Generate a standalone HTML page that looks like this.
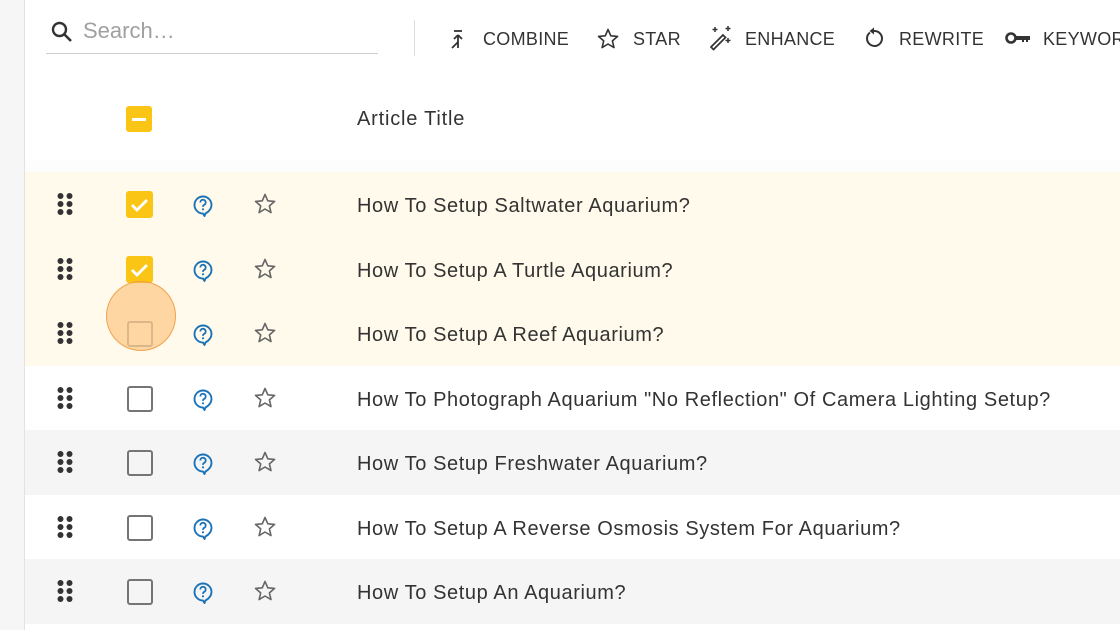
<!DOCTYPE html>
<html><head><style>
body{margin:0;width:1120px;height:630px;overflow:hidden;background:#fff;font-family:"Liberation Sans",Arial,sans-serif;position:relative}
.side{position:absolute;left:0;top:0;width:24px;height:630px;background:#f6f6f6;border-right:1px solid #e2e2e2}
.abs{position:absolute}
.btn{position:absolute;top:28px;font-size:18px;color:#333;letter-spacing:0.3px;line-height:22px}
.row{position:absolute;left:25px;width:1095px;height:65px}
.row .t{position:absolute;left:332px;top:23px;font-size:20px;letter-spacing:0.6px;color:#333;white-space:nowrap}
.dots{position:absolute;left:32px;top:20px}
.cb{position:absolute;left:102px;top:20px;width:22px;height:22px;border:2.5px solid #757575;border-radius:3px}
.cbon{position:absolute;left:101px;top:19px;width:27px;height:27px;background:#fbc515;border-radius:3px}
.help{position:absolute;left:167px;top:21px}
.star{position:absolute;left:228px;top:20px}
</style></head><body>
<div class="side"></div>
<svg class="abs" style="left:50px;top:20px" width="24" height="24" viewBox="0 0 24 24"><circle cx="9.5" cy="9.5" r="6.5" fill="none" stroke="#333" stroke-width="2.4"/><path d="M14 14l7 7" stroke="#333" stroke-width="2.6"/></svg>
<div class="abs" style="left:83px;top:18px;font-size:22px;color:#a0a0a0">Search…</div>
<div class="abs" style="left:46px;top:53px;width:332px;height:1px;background:#cfcfcf"></div>
<div class="abs" style="left:414px;top:20px;width:1px;height:36px;background:#ddd"></div>
<svg class="abs" style="left:448px;top:28px" width="20" height="22" viewBox="0 0 20 22"><path d="M10 20V7M10 7L6 11M10 7l4 4M10 14l-6 6" stroke="#333" stroke-width="1.8" fill="none"/><path d="M6 3h8" stroke="#333" stroke-width="1.8"/></svg>
<div class="btn" style="left:483px">COMBINE</div>
<svg class="abs" style="left:596px;top:27px" width="24" height="24" viewBox="0 0 24 24"><path d="M12 2.5l2.8 6.3 6.8.6-5.2 4.5 1.6 6.7L12 17l-5.9 3.6 1.6-6.7L2.5 9.4l6.8-.6z" fill="none" stroke="#333" stroke-width="1.6" stroke-linejoin="round"/></svg>
<div class="btn" style="left:633px">STAR</div>
<svg class="abs" style="left:707px;top:25px" width="26" height="26" viewBox="0 0 26 26"><path d="M4 22l12-12 2.5 2.5-12 12z" fill="none" stroke="#333" stroke-width="1.7"/><path d="M8 2v5M5.5 4.5h5M21 1v5M18.5 3.5h5M21 13v5M18.5 15.5h5" stroke="#333" stroke-width="1.5"/></svg>
<div class="btn" style="left:745px">ENHANCE</div>
<svg class="abs" style="left:862px;top:26px" width="24" height="24" viewBox="0 0 24 24"><path d="M8 6.5A7.5 7.5 0 1 0 12 5" fill="none" stroke="#333" stroke-width="2"/><path d="M12 1.5v7l-4.5-3.5z" fill="#333"/></svg>
<div class="btn" style="left:899px">REWRITE</div>
<svg class="abs" style="left:1005px;top:31px" width="26" height="14" viewBox="0 0 26 14"><circle cx="6" cy="7" r="4.5" fill="none" stroke="#333" stroke-width="2.6"/><path d="M10 5h15v4h-2v2h-2V9h-2v2h-2V9h-7z" fill="#333"/></svg>
<div class="btn" style="left:1043px">KEYWORDS</div>

<div class="abs" style="left:126px;top:106px;width:26px;height:26px;background:#fbc515;border-radius:3px"><div style="position:absolute;left:6px;top:11.5px;width:14px;height:3px;background:#fff"></div></div>
<div class="abs" style="left:357px;top:108px;font-size:20px;letter-spacing:0.8px;color:#333">Article Title</div>
<div class="abs" style="left:25px;top:160px;width:1095px;height:12px;background:#fdfdfd"></div>

<div id="rows"></div>
<script>
const T=["How To Setup Saltwater Aquarium?","How To Setup A Turtle Aquarium?","How To Setup A Reef Aquarium?",'How To Photograph Aquarium "No Reflection" Of Camera Lighting Setup?',"How To Setup Freshwater Aquarium?","How To Setup A Reverse Osmosis System For Aquarium?","How To Setup An Aquarium?"];
const bg=["#fffaeb","#fffaeb","#fffaeb","#fff","#f5f5f5","#fff","#f5f5f5"];
const tops=[172,237,301,366,430,495,559];
let h="";
const dots='<svg class="dots" width="16" height="24" viewBox="0 0 16 24">'+[4,12,20].map(y=>`<circle cx="3.5" cy="${y}" r="3" fill="#333"/><circle cx="12.5" cy="${y}" r="3" fill="#333"/>`).join("")+'</svg>';
const help='<svg class="help" width="22" height="24" viewBox="0 0 22 24"><path d="M11 20.5A8.5 8.5 0 1 1 19.5 12c0 4-2.5 6.5-6 8.5l-1 2.5z" fill="none" stroke="#1a73b8" stroke-width="1.9" stroke-linejoin="round"/><path d="M8.3 9.5a2.7 2.7 0 1 1 3.8 2.4c-.9.5-1.1 1-1.1 2" fill="none" stroke="#1a73b8" stroke-width="1.8"/><circle cx="11" cy="16.3" r="1.1" fill="#1a73b8"/></svg>';
const star='<svg class="star" width="24" height="24" viewBox="0 0 24 24"><path d="M12 2.5l2.8 6.3 6.8.6-5.2 4.5 1.6 6.7L12 17l-5.9 3.6 1.6-6.7L2.5 9.4l6.8-.6z" fill="none" stroke="#666" stroke-width="1.6" stroke-linejoin="round"/></svg>';
T.forEach((t,i)=>{
 let cb = i<2 ? '<div class="cbon"><svg width="27" height="27" viewBox="0 0 27 27"><path d="M6 14l5 5 10-10" fill="none" stroke="#fff" stroke-width="2.8"/></svg></div>' : '<div class="cb"'+(i==2?' style="border-color:#bbb"':'')+'></div>';
 h+=`<div class="row" style="top:${tops[i]}px;height:${(tops[i+1]||624)-tops[i]}px;background:${bg[i]}">${dots}${cb}${help}${star}<div class="t">${t.replace(/"/g,'&quot;')}</div></div>`;
});
h+='<div class="abs" style="left:106px;top:281px;width:68px;height:68px;border-radius:50%;background:rgba(252,178,90,0.5);border:1.5px solid rgba(240,150,60,0.8)"></div>';
document.getElementById("rows").innerHTML=h;
</script>
</body></html>
